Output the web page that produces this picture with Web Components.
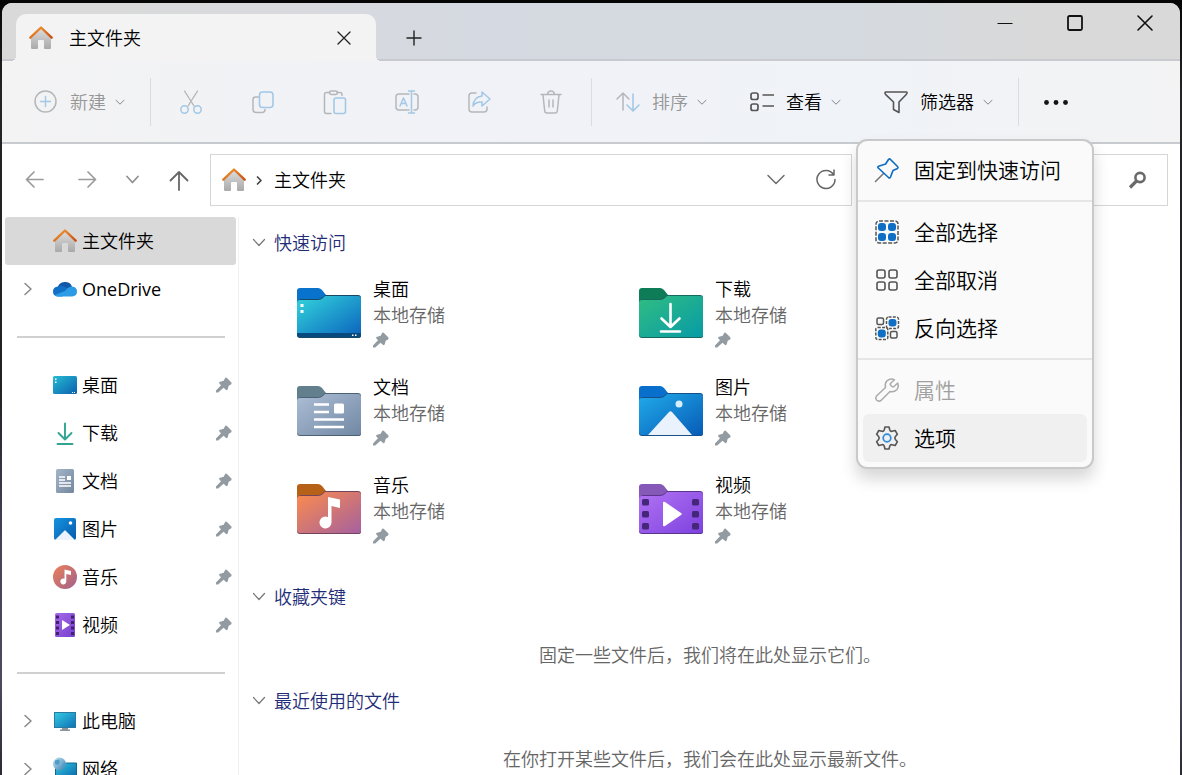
<!DOCTYPE html>
<html lang="zh-CN">
<head>
<meta charset="utf-8">
<meta name="viewport" content="width=device-width, initial-scale=1">
<title>主文件夹</title>
<style>
    :root {
        --textColor: #000;
        --mutedColor: #666;
        --disabledColor: #969696;
        --headingColor: #1f2d78;
        --lineColor: #d0d0d0;
        --surface: #fff;
        --textSize: 18px;
        --menuTextSize: 21px;
    }
    body {
        margin: 0;
        height: 100vh;
        overflow: hidden;
        color: var(--textColor);
        background: linear-gradient(#050505, #242426 12%, #222224 50%, #45435a 70%, #4c4a60 88%, #2b2b31);
        font: 350 var(--textSize)/26px "Open Sans", "Noto Sans CJK SC", sans-serif;
    }
</style>
</head>
<body>
<explorer-window></explorer-window>

<script>
const line = 'fill="none" stroke-linecap="round" stroke-linejoin="round"'
const grey = '#b4b7ba'
const paleBlue = '#a3c8e6'
const dark = '#555'
const blue = '#0f6fc5'

const gradient = (id, from, to, extra = 'x2="1" y2="1"') => `
    <linearGradient id="${id}" x1="0" y1="0" ${extra}>
        <stop offset="0" stop-color="${from}"/>
        <stop offset="1" stop-color="${to}"/>
    </linearGradient>`

// shared folder shape, the caller adds the emblem on its front
const folder = (tab, from, to, edge, emblem) => `
    <defs>${gradient('front', from, to)}</defs>
    <path fill="${tab}" d="M0 22V7q0-3 3-3h18q2 0 4 2l4 5-7 11z"/>
    <path fill="${edge}" d="M0 20q0-4 4-5h17q3 0 5-2l2-2h33q3 0 3 3v38q0 2-3 2H3q-3 0-3-3z"/>
    <path fill="url(#front)" d="M0 19q0-3 3-3h18q3 0 5-2l2-2h33q3 0 3 3v36q0 2-3 2H3q-3 0-3-3z"/>
    ${emblem}`

const icons = {
    home: ['0 0 24 24', `
        <defs>${gradient('wall', '#dedede', '#a9a9a9', 'x2="0" y2="1"')}${gradient('roof', '#f49b32', '#c94f14')}</defs>
        <path fill="url(#wall)" d="M2 11 12 2l10 9v11q0 1-1 1h-5q-1 0-1-1v-7q0-1-1-1h-4q-1 0-1 1v7q0 1-1 1H3q-1 0-1-1z"/>
        <path ${line} stroke="url(#roof)" stroke-width="2.4" d="M1.3 11.700 12 1.500l10.7 10.200"/>`],
    close: ['0 0 24 24', `<path ${line} stroke="#222" stroke-width="1.3" d="m6 6 12 12M18 6 6 18"/>`],
    winClose: ['0 0 24 24', `<path ${line} stroke="#111" stroke-width="1.6" d="m5 5 14 14M19 5 5 19"/>`],
    winMax: ['0 0 24 24', `<rect x="5" y="5" width="14" height="14" rx="1.5" fill="none" stroke="#111" stroke-width="1.8"/>`],
    winMin: ['0 0 24 24', `<path stroke="#111" stroke-width="1.2" d="M4.5 12.5h15"/>`],
    plus: ['0 0 24 24', `<path ${line} stroke="#222" stroke-width="1.4" d="M12 5v14M5 12h14"/>`],
    down: ['0 0 12 12', `<path ${line} stroke="currentColor" d="m2 4.3 4 3.9 4-3.9"/>`],
    create: ['0 0 24 24', `
        <circle cx="11.5" cy="11.5" r="10.5" fill="none" stroke="${grey}" stroke-width="1.5"/>
        <path ${line} stroke="${paleBlue}" stroke-width="1.5" d="M11.5 6.500v10M6.500 11.5h10"/>`],
    cut: ['0 0 24 24', `
        <path ${line} stroke="${grey}" stroke-width="1.4" d="M5.5 1 15 16M18.5 1 9 16"/>
        <g fill="none" stroke="${paleBlue}" stroke-width="1.5"><circle cx="5.5" cy="19.5" r="3.7"/><circle cx="18.5" cy="19.5" r="3.7"/></g>`],
    copy: ['0 0 24 24', `
        <path ${line} stroke="${grey}" stroke-width="1.5" d="M8 7H4.500Q2 7 2 9.500v10Q2 22.500 5.500 22.500H11q3 0 3-3"/>
        <rect x="8.500" y="2" width="13.500" height="15.500" rx="3" fill="none" stroke="${paleBlue}" stroke-width="1.6"/>`],
    paste: ['0 0 24 24', `
        <path ${line} stroke="${grey}" stroke-width="1.5" d="M8 23.500H3.500q-2 0-2-2V4.500q0-2 2-2h3M14 2.500h3q2 0 2 2v1"/>
        <rect x="6.500" y="1" width="8" height="3.500" rx="1.700" fill="none" stroke="${grey}" stroke-width="1.5"/>
        <rect x="11" y="8" width="11.500" height="15.500" rx="2" fill="none" stroke="${paleBlue}" stroke-width="1.6"/>`],
    rename: ['0 0 24 24', `
        <path ${line} stroke="${grey}" stroke-width="1.5" d="M14 4H4Q1 4 1 7v10q0 3 3 3h10M19 4h1q3 0 3 3v10q0 3-3 3h-1"/>
        <path ${line} stroke="${paleBlue}" stroke-width="1.5" d="M5 16 8.500 8l3.500 8M6.300 13.500h4.400M16.500 1v22M13.500 1h6M13.500 23h6"/>`],
    share: ['0 0 24 24', `
        <path ${line} stroke="${grey}" stroke-width="1.5" d="M9 3H5Q2 3 2 6v13q0 3 3 3h12q3 0 3-3v-2"/>
        <path ${line} stroke="${paleBlue}" stroke-width="1.6" d="m15 2 8 7-8 7v-4q-6-.5-9 4 .5-9 9-10z"/>`],
    trash: ['0 0 24 24', `
        <path ${line} stroke="${grey}" stroke-width="1.5" d="M2 4.500h20M8.500 4q.5-3 3.500-3t3.500 3M4 5l1.700 16q.2 2 2.300 2h8q2 0 2.300-2L20 5M10 10v7M14 10v7"/>`],
    sort: ['0 0 24 24', `
        <path ${line} stroke="${grey}" stroke-width="1.5" d="M7 20V3M1 9l6-6 6 6"/>
        <path ${line} stroke="${paleBlue}" stroke-width="1.6" d="M17 4v17M11 15l6 6 6-6"/>`],
    view: ['0 0 24 24', `
        <g fill="none" stroke="${dark}" stroke-width="1.7"><rect x="1" y="3" width="7" height="6.500" rx="2"/><rect x="1" y="14" width="7" height="6.500" rx="2"/>
        <path d="M12.500 5H24M12.500 16H24"/></g>`],
    filter: ['0 0 24 24', `
        <path ${line} stroke="${dark}" stroke-width="1.6" d="M1.500 2h21q.7 0 .5 1-.3 1-1 1.800L15 12v10.500l-5.500-3V12L2 4.800Q1 4 1 3q0-1 .5-1z"/>`],
    more: ['0 0 24 24', `<g fill="#151515"><circle cx="3.500" cy="12.500" r="2.400"/><circle cx="13" cy="12.500" r="2.400"/><circle cx="22.500" cy="12.500" r="2.400"/></g>`],
    back: ['0 0 24 24', `<path ${line} stroke="#9b9b9b" stroke-width="1.7" d="M20 11.500H3.500M11 4 3.500 11.500 11 19"/>`],
    forward: ['0 0 24 24', `<path ${line} stroke="#9b9b9b" stroke-width="1.7" d="M4 11.500h16.500M13 4l7.500 7.500L13 19"/>`],
    recent: ['0 0 24 24', `<path ${line} stroke="#8f8f8f" stroke-width="1.7" d="m6 8.500 5.500 6 5.500-6"/>`],
    up: ['0 0 24 24', `<path ${line} stroke="#666" stroke-width="1.8" d="M12 22V4M3.500 12.500 12 4l8.500 8.500"/>`],
    crumb: ['0 0 12 12', `<path ${line} stroke="#444" stroke-width="1.7" d="m3.500 3 3.500 3.500-3.500 3.500"/>`],
    wideDown: ['0 0 24 24', `<path ${line} stroke="#666" stroke-width="1.4" d="m4 7.500 8 8 8-8"/>`],
    refresh: ['0 0 24 24', `<path ${line} stroke="#666" stroke-width="1.5" d="M19.500 6.500A9 9 0 1 0 21 11.500M20 2v5h-5"/>`],
    search: ['0 0 24 24', `
        <g fill="none" stroke="#6a6a6a"><circle cx="15" cy="9.500" r="4.600" stroke-width="2.600"/><path stroke-width="3.200" d="m11.500 13-6.500 6.500"/></g>`],
    expand: ['0 0 12 16', `<path ${line} stroke="#888" stroke-width="1.5" d="m4 2.500 6 5.500-6 5.500"/>`],
    collapse: ['0 0 14 14', `<path ${line} stroke="#777" stroke-width="1.2" d="m1.500 3.500 5.500 6 5.500-6"/>`],
    pin: ['0 0 16 16', `
        <path fill="#929ba1" d="M9 1.200q1-1.200 2.200 0l4 4q1 1.200-.2 2.200l-2.300 1.300-.9 3.300q-.7 2-2.200.6L7.500 10.700 2.200 15.500H0v-2L5 8.200 3.600 6.800Q2.300 5.200 4.200 4.700l3.500-1z"/>`],
    oneDrive: ['0 0 24 24', `
        <path fill="#1257a8" d="M4 12q2-8 9-7 5 .5 6 5l-8 5z"/>
        <path fill="#1170c6" d="M5 9.500q4-2 8 1l6 4-10 5H5q-5-.5-5-5t5-5z"/>
        <path fill="#2b9be6" d="M12 14q3-4.500 7-4.500 5 .5 5 5t-5 5H5q-2 0-3.500-1.500z"/>`],
    desktop: ['0 0 24 24', `
        <defs>${gradient('screen', '#26bcd4', '#0b60ad')}</defs>
        <rect y="3" width="24" height="18" rx="1.5" fill="url(#screen)"/>
        <path fill="#fff" d="M2 5.500h1.500V7H2zM2 8.500h1.500V10H2zM19 19h1v1h-1zM21 19h1v1h-1z"/>`],
    download: ['0 0 24 24', `<path ${line} stroke="#31a493" stroke-width="1.9" d="M12 2.500v15M5.500 12l6.500 6.500 6.500-6.500M4.500 23h15"/>`],
    document: ['0 0 24 24', `
        <defs>${gradient('page', '#a4b5c9', '#73879d')}</defs>
        <rect x="3" width="18" height="24" rx="1.5" fill="url(#page)"/>
        <path stroke="#fff" stroke-width="1.3" d="M6 8h6M6 11h6M6 14h12M6 17h12"/>
        <path fill="#fff" d="M14 7h4v4h-4z"/>`],
    picture: ['0 0 24 24', `
        <defs>${gradient('sky', '#1594df', '#075aac')}</defs>
        <rect x="1" y="1" width="22" height="22" rx="2" fill="url(#sky)"/>
        <path fill="#edf3fc" d="m2 23 9.300-9.300q.7-.7 1.400 0L22 23z"/><circle cx="17.500" cy="6" r="1.800" fill="#fff"/>`],
    music: ['0 0 24 24', `
        <defs>${gradient('disc', '#ec8058', '#a0618e')}</defs>
        <circle cx="12" cy="12" r="12" fill="url(#disc)"/>
        <path fill="#fff" d="M11.500 4.500 18 6v4l-4.700-1v7.500a3 3 0 1 1-1.800-2.800z"/>`],
    video: ['0 0 24 24', `
        <defs>${gradient('film', '#a768e8', '#7540ce')}</defs>
        <rect x="2" width="20" height="24" rx="1.5" fill="url(#film)"/>
        <path fill="#402071" d="M3 2.500h3v3H3zM3 8h3v3H3zM3 13.500h3v3H3zM3 19h3v3H3zM18 2.500h3v3h-3zM18 8h3v3h-3zM18 13.500h3v3h-3zM18 19h3v3h-3z"/>
        <path fill="#fff" d="m9 7 8 5-8 5z"/>`],
    computer: ['0 0 24 24', `
        <defs>${gradient('monitor', '#34cbe3', '#0e70b5')}</defs>
        <rect x="1.500" y="3.500" width="21" height="15" fill="url(#monitor)" stroke="#287b9e"/>
        <path fill="#8b949b" d="M9 19h6v1.500h2V22H7v-1.500h2z"/>`],
    network: ['0 0 24 24', `
        <defs>${gradient('lan', '#32c8e3', '#0865aa')}${gradient('globe', '#c5e7f5', '#327fae')}</defs>
        <path fill="url(#lan)" stroke="#17658a" d="M2.500 21.500V7.500h8l3-1.500h10v15.500z"/>
        <circle cx="6.500" cy="7" r="6.500" fill="url(#globe)"/>
        <path fill="#4f9cc7" d="m2 3.500 4-1 1 2.500-2 3-3-1zm8 3 2-1v4l-3 2z"/>`],
    pinOutline: ['0 0 24 24', `
        <path ${line} stroke="#777" stroke-width="1.6" d="m8.500 15.500-8 8"/>
        <path ${line} stroke="${blue}" stroke-width="1.7" d="M13.500 1.500q1-1 2 0L22.500 8.500q1 1 0 2l-4.500 2-2.500 6.500q-.7 1.500-2 .5L3.300 10q-1-1 .3-1.800l7-2.200z"/>`],
    selectAll: ['0 0 24 24', `
        <rect x="1" y="1" width="22" height="22" rx="3" fill="none" stroke="${dark}" stroke-width="1.5" stroke-dasharray="4 1.5"/>
        <g fill="${blue}"><rect x="3" y="3" width="8" height="8" rx="3"/><rect x="13" y="3" width="8" height="8" rx="3"/><rect x="3" y="13" width="8" height="8" rx="3"/><rect x="13" y="13" width="8" height="8" rx="3"/></g>`],
    selectNone: ['0 0 24 24', `
        <g fill="none" stroke="${dark}" stroke-width="1.6"><rect x="2" y="2" width="8" height="8" rx="2"/><rect x="14" y="2" width="8" height="8" rx="2"/><rect x="2" y="14" width="8" height="8" rx="2"/><rect x="14" y="14" width="8" height="8" rx="2"/></g>`],
    invert: ['0 0 24 24', `
        <g fill="none" stroke="${dark}" stroke-width="1.5"><rect x="2" y="2" width="6.500" height="6.500" rx="1.5"/><rect x="15.500" y="15.500" width="6.500" height="6.500" rx="1.5"/>
        <rect x="11.500" y="1" width="12" height="11.500" rx="2" stroke-dasharray="3 1.3"/><rect x=".8" y="11.500" width="12" height="12" rx="2" stroke-dasharray="3 1.3"/></g>
        <g fill="${blue}"><rect x="13.500" y="3" width="8" height="7.500" rx="3"/><rect x="2.800" y="13.500" width="8" height="8" rx="3"/></g>`],
    wrench: ['0 0 24 24', `
        <path ${line} stroke="#aaa" stroke-width="1.5" d="M19.500 1.800q-4-2-7.500 1-2.500 2.800-1.500 6.700L1.500 18q-1.500 2 0 4 2 2 4.500.5l9-9q4 1 6.700-1.700 2.500-3 1-6.800L19 8.500q-1 1-2 0l-1.300-1.300q-1-1 0-2z"/>`],
    gear: ['0 0 24 24', `
        <path ${line} stroke="${dark}" stroke-width="1.6" d="M10 1h4l.8 3q.6 1.600 2.200 1.300l3.200-.8 2.200 3.800-2 2.200q-1.200 1.500 0 3l2 2.200-2.200 3.800-3.200-.8q-1.600-.3-2.200 1.300l-.8 3h-4l-.8-3q-.6-1.600-2.200-1.300l-3.200.8-2.200-3.800 2-2.200q1.200-1.500 0-3l-2-2.200 2.200-3.800 3.200.8q1.600.3 2.200-1.300z"/>
        <circle cx="12" cy="12" r="3.800" fill="none" stroke="#2b8bdc" stroke-width="1.7"/>`],
    desktopFolder: ['0 -2 64 64', folder('#0872cd', '#32d5dc', '#0b62bd', '#174866', `
        <path fill="#094a7e" d="M0 49h64v2q0 2-3 2H3q-3 0-3-2z"/>
        <path fill="#fff" d="M3.500 20h3v3h-3zM3.500 26h3v3h-3zM55 50.500h1.500V52H55zM58 50.500h1.500V52H58z"/>`)],
    downloadFolder: ['0 -2 64 64', folder('#0f7c58', '#31bd82', '#079ba6', '#15695f', `
        <path ${line} stroke="#fff" stroke-width="2.6" d="M31.500 20v22M22.500 34.500l9 8.500 9-8.500M22 47.500h19"/>`)],
    documentFolder: ['0 -2 64 64', folder('#617f8c', '#adbed5', '#7188a4', '#4c6175', `
        <path stroke="#fff" stroke-width="2.6" d="M17 22.500h15M17 30h15M17 37.500h30M17 45h30"/>
        <rect x="37" y="21.500" width="10" height="10" rx="1.5" fill="#fff"/>`)],
    pictureFolder: ['0 -2 64 64', folder('#0870cc', '#21abe9', '#075bb7', '#164f89', `
        <path fill="#e9f2fd" d="m9 53 21-23q1.500-1.500 3 0l20 23z"/><circle cx="40" cy="22" r="3.500" fill="#d8eefa"/>`)],
    musicFolder: ['0 -2 64 64', folder('#b76018', '#fc8c4c', '#a5609f', '#73445b', `
        <path fill="#fff" d="m31 17 12 2.500V28l-8.500-2v16.500a6 6 0 1 1-3.500-5.500z"/>`)],
    videoFolder: ['0 -2 64 64', folder('#8659b8', '#b273f3', '#7d42df', '#5b348c', `
        <g fill="#45277a"><rect x="3" y="19" width="7" height="6.500" rx="1.5"/><rect x="3" y="31" width="7" height="6.500" rx="1.5"/><rect x="3" y="43" width="7" height="6.500" rx="1.5"/><rect x="53" y="19" width="7" height="6.500" rx="1.5"/><rect x="53" y="31" width="7" height="6.500" rx="1.5"/><rect x="53" y="43" width="7" height="6.500" rx="1.5"/></g>
        <path fill="#fff" d="M24 23q0-2 2-1l16 11q1.500 1 0 2L26 46q-2 1-2-1z"/>`)]
}

class ShadowElement extends HTMLElement {
    constructor() {
        super()
        this.attachShadow({mode: 'open'})
    }
    connectedCallback() {
        const template = document.createElement('template')
        template.innerHTML = `
            <style>
                * { box-sizing: border-box; }
                button {
                    margin: 0;
                    padding: 0;
                    border: 0;
                    background: none;
                    font: inherit;
                    color: inherit;
                    display: flex;
                    align-items: center;
                    justify-content: center;
                }
            </style>
            ${this.render()}
        `
        this.shadowRoot.replaceChildren(template.content.cloneNode(true))
    }
}

class UiIcon extends ShadowElement {
    render() {
        const [viewBox, shapes] = icons[this.getAttribute('name')]
        return `
            <style>
                :host {
                    display: block;
                    flex: none;
                    width: var(--iconWidth, 24px);
                    height: var(--iconHeight, var(--iconWidth, 24px));
                }
                svg { display: block; width: 100%; height: 100%; overflow: visible; }
            </style>
            <svg viewBox="${viewBox}" aria-hidden="true">${shapes}</svg>
        `
    }
}

class TitleBar extends ShadowElement {
    render() {
        return `
            <style>
                :host {
                    display: flex;
                    height: 58px;
                    padding: 11px 0 0 14px;
                    background: linear-gradient(90deg, #d9d9d9 8%, #d5d9e1 40%, #d5dae0 72%, #d9d9d9 88%);
                    box-shadow: inset 0 -2px #c8cad0;
                }
                .tab {
                    position: relative;
                    display: flex;
                    align-items: center;
                    gap: 16px;
                    width: 360px;
                    padding: 0 16px 0 13px;
                    background: #f3f3f4;
                    border-radius: 10px 10px 0 0;
                }
                /* flared feet of the active tab */
                .tab::before,
                .tab::after {
                    content: '';
                    position: absolute;
                    bottom: 0;
                    width: 5px;
                    height: 5px;
                }
                .tab::before { right: 100%; background: radial-gradient(circle at 0 0, transparent 5px, #f3f3f4 5px); }
                .tab::after { left: 100%; background: radial-gradient(circle at 100% 0, transparent 5px, #f3f3f4 5px); }
                .name { flex: 1; }
                .tab button { width: 32px; height: 32px; }
                .add { width: 48px; margin-left: 14px; }
                .controls { display: flex; margin: -11px 0 0 auto; height: 40px; }
                .controls button { width: 70px; }
            </style>
            <div class="tab">
                <ui-icon name="home"></ui-icon>
                <span class="name">主文件夹</span>
                <button aria-label="关闭标签页"><ui-icon name="close"></ui-icon></button>
            </div>
            <button class="add" aria-label="新标签页"><ui-icon name="plus"></ui-icon></button>
            <div class="controls">
                <button aria-label="最小化"><ui-icon name="winMin"></ui-icon></button>
                <button aria-label="最大化"><ui-icon name="winMax"></ui-icon></button>
                <button aria-label="关闭"><ui-icon name="winClose"></ui-icon></button>
            </div>
        `
    }
}

class CommandButton extends ShadowElement {
    render() {
        const disabled = this.hasAttribute('disabled') ? 'disabled' : ''
        return `
            <style>
                :host { display: block; }
                button { height: 48px; gap: 12px; padding: 0 12px; }
                button:disabled { color: var(--disabledColor); }
                .label { display: flex; align-items: center; gap: 8px; white-space: nowrap; }
                .down { --iconWidth: 12px; color: #888; }
            </style>
            <button ${disabled}>
                <ui-icon name="${this.getAttribute('icon')}"></ui-icon>
                <span class="label"><slot></slot><ui-icon class="down" name="down"></ui-icon></span>
            </button>
        `
    }
}

class ToolButton extends ShadowElement {
    render() {
        const disabled = this.hasAttribute('disabled') ? 'disabled' : ''
        return `
            <style>
                :host { display: block; width: 72px; }
                button { width: 100%; height: 48px; }
            </style>
            <button ${disabled} aria-label="${this.getAttribute('label')}">
                <ui-icon name="${this.getAttribute('icon')}"></ui-icon>
            </button>
        `
    }
}

class MenuEntry extends ShadowElement {
    render() {
        const disabled = this.hasAttribute('disabled') ? 'disabled' : ''
        return `
            <style>
                :host { display: block; }
                button {
                    width: 100%;
                    height: 48px;
                    gap: 15px;
                    padding: 0 26px 0 12px;
                    justify-content: flex-start;
                    border-radius: 6px;
                    white-space: nowrap;
                }
                button:disabled { color: #a0a0a0; }
                :host([active]) button { background: #f0f0f0; }
            </style>
            <button role="menuitem" ${disabled}>
                <ui-icon name="${this.getAttribute('icon')}"></ui-icon>
                <span><slot></slot></span>
            </button>
        `
    }
}

class MoreMenu extends ShadowElement {
    render() {
        return `
            <style>
                :host { display: block; position: relative; width: 64px; }
                .trigger { width: 100%; height: 48px; }
                .menu {
                    position: absolute;
                    z-index: 2;
                    top: calc(100% + 13px);
                    right: -7px;
                    padding: 5px;
                    border: 2px solid #c9c9cb;
                    border-radius: 11px;
                    background: #fafafa;
                    background-clip: padding-box;
                    box-shadow: 0 10px 16px rgba(0, 0, 0, .16);
                    font-size: var(--menuTextSize);
                    line-height: 28px;
                }
                hr { height: 2px; margin: 6px -5px; border: 0; background: #e6e6e6; }
            </style>
            <button class="trigger" aria-label="查看更多" aria-expanded="true"><ui-icon name="more"></ui-icon></button>
            <div class="menu" role="menu">
                <menu-entry icon="pinOutline">固定到快速访问</menu-entry>
                <hr>
                <menu-entry icon="selectAll">全部选择</menu-entry>
                <menu-entry icon="selectNone">全部取消</menu-entry>
                <menu-entry icon="invert">反向选择</menu-entry>
                <hr>
                <menu-entry icon="wrench" disabled>属性</menu-entry>
                <menu-entry icon="gear" active>选项</menu-entry>
            </div>
        `
    }
}

class CommandBar extends ShadowElement {
    render() {
        return `
            <style>
                :host {
                    display: flex;
                    align-items: center;
                    height: 83px;
                    padding-left: 20px;
                    background: linear-gradient(90deg, #f3f3f4, #f0f2f7 45%, #f0f3f7 75%, #f3f3f4);
                    border-bottom: 2px solid #c7cacf;
                }
                .group { display: flex; }
                .text { gap: 18px; }
                i { width: 1px; height: 48px; background: #dadcdf; }
                .after { margin: 0 4px 0 12px; }
                .before { margin: 0 12px 0 4px; }
            </style>
            <command-button icon="create" disabled>新建</command-button>
            <i class="after"></i>
            <div class="group">
                <tool-button icon="cut" label="剪切" disabled></tool-button>
                <tool-button icon="copy" label="复制" disabled></tool-button>
                <tool-button icon="paste" label="粘贴" disabled></tool-button>
                <tool-button icon="rename" label="重命名" disabled></tool-button>
                <tool-button icon="share" label="共享" disabled></tool-button>
                <tool-button icon="trash" label="删除" disabled></tool-button>
            </div>
            <i class="before"></i>
            <div class="group text">
                <command-button icon="sort" disabled>排序</command-button>
                <command-button icon="view">查看</command-button>
                <command-button icon="filter">筛选器</command-button>
            </div>
            <i class="after"></i>
            <more-menu></more-menu>
        `
    }
}

class AddressBar extends ShadowElement {
    render() {
        return `
            <style>
                :host { display: flex; padding: 10px 12px 11px 7px; }
                .nav { width: 52px; height: 52px; }
                .recent { width: 40px; }
                .address,
                .search {
                    display: flex;
                    align-items: center;
                    height: 52px;
                    border: 1px solid #d6d6d6;
                }
                .address { flex: 1; margin: 0 12px 0 5px; padding-left: 11px; gap: 8px; }
                .address a { flex: 1; color: inherit; text-decoration: none; }
                .address button { width: 50px; height: 50px; }
                .tools { display: flex; }
                .crumb { --iconWidth: 12px; }
                .search { width: 304px; }
                input {
                    flex: 1;
                    min-width: 0;
                    height: 100%;
                    padding: 0 12px;
                    border: 0;
                    font: inherit;
                }
                .search button { width: 60px; height: 50px; }
            </style>
            <button class="nav" aria-label="后退"><ui-icon name="back"></ui-icon></button>
            <button class="nav" aria-label="前进"><ui-icon name="forward"></ui-icon></button>
            <button class="nav recent" aria-label="最近浏览的位置"><ui-icon name="recent"></ui-icon></button>
            <button class="nav" aria-label="向上"><ui-icon name="up"></ui-icon></button>
            <div class="address">
                <ui-icon name="home"></ui-icon>
                <ui-icon class="crumb" name="crumb"></ui-icon>
                <a href="#home">主文件夹</a>
                <div class="tools">
                    <button aria-label="以前的位置"><ui-icon name="wideDown"></ui-icon></button>
                    <button aria-label="刷新"><ui-icon name="refresh"></ui-icon></button>
                </div>
            </div>
            <div class="search">
                <input type="text" aria-label="搜索">
                <button aria-label="开始搜索"><ui-icon name="search"></ui-icon></button>
            </div>
        `
    }
}

class SideItem extends ShadowElement {
    render() {
        const expand = this.hasAttribute('expandable') ? '<ui-icon name="expand"></ui-icon>' : ''
        const pin = this.hasAttribute('pinned') ? '<ui-icon class="pin" name="pin"></ui-icon>' : ''
        return `
            <style>
                :host { display: block; }
                a {
                    display: flex;
                    align-items: center;
                    gap: 5px;
                    height: 48px;
                    padding: 0 4px 0 16px;
                    border-radius: 3px;
                    color: inherit;
                    text-decoration: none;
                }
                :host([active]) a { background: #d9d9d9; }
                .expand { width: 27px; --iconWidth: 12px; --iconHeight: 16px; }
                .name { flex: 1; }
                .pin { --iconWidth: 16px; }
            </style>
            <a href="#${this.getAttribute('icon')}">
                <span class="expand">${expand}</span>
                <ui-icon name="${this.getAttribute('icon')}"></ui-icon>
                <span class="name"><slot></slot></span>
                ${pin}
            </a>
        `
    }
}

class SideNav extends ShadowElement {
    render() {
        return `
            <style>
                :host {
                    display: block;
                    width: 237px;
                    flex: none;
                    padding: 0 2px 0 3px;
                    border-right: 1px solid #f0f0f0;
                    overflow: hidden;
                }
                hr { height: 2px; margin: 23px 11px 23px 12px; border: 0; background: var(--lineColor); }
                /* the only Latin name, regular weight keeps it level with the rest */
                .latin { font-weight: 400; }
            </style>
            <nav>
                <side-item icon="home" active>主文件夹</side-item>
                <side-item class="latin" icon="oneDrive" expandable>OneDrive</side-item>
                <hr>
                <side-item icon="desktop" pinned>桌面</side-item>
                <side-item icon="download" pinned>下载</side-item>
                <side-item icon="document" pinned>文档</side-item>
                <side-item icon="picture" pinned>图片</side-item>
                <side-item icon="music" pinned>音乐</side-item>
                <side-item icon="video" pinned>视频</side-item>
                <hr>
                <side-item icon="computer" expandable>此电脑</side-item>
                <side-item icon="network" expandable>网络</side-item>
            </nav>
        `
    }
}

class FolderCard extends ShadowElement {
    render() {
        return `
            <style>
                :host {
                    display: flex;
                    align-items: center;
                    gap: 12px;
                    padding: 7px 0 15px;
                    --iconWidth: 64px;
                }
                .place { color: var(--mutedColor); }
                .pin {
                    display: flex;
                    align-items: center;
                    height: 24px;
                    --iconWidth: 16px;
                }
            </style>
            <ui-icon name="${this.getAttribute('icon')}"></ui-icon>
            <div>
                <div><slot></slot></div>
                <div class="place">本地存储</div>
                <div class="pin"><ui-icon name="pin"></ui-icon></div>
            </div>
        `
    }
}

class FileSection extends ShadowElement {
    render() {
        return `
            <style>
                :host { display: block; }
                h2 { margin: 0; font: inherit; }
                button { height: 52px; gap: 8px; color: var(--headingColor); }
                button ui-icon { --iconWidth: 14px; }
            </style>
            <h2><button aria-expanded="true"><ui-icon name="collapse"></ui-icon><span>${this.getAttribute('heading')}</span></button></h2>
            <slot></slot>
        `
    }
}

class FileList extends ShadowElement {
    render() {
        return `
            <style>
                :host { display: block; flex: 1; min-width: 0; padding: 0 12px 0 13px; overflow: hidden; }
                .cards {
                    display: grid;
                    grid-template-columns: repeat(auto-fill, 342px);
                    padding-left: 45px;
                    margin-bottom: 8px;
                }
                p {
                    margin: 12px 0 0;
                    line-height: 40px;
                    text-align: center;
                    color: var(--mutedColor);
                }
            </style>
            <file-section heading="快速访问">
                <div class="cards">
                    <folder-card icon="desktopFolder">桌面</folder-card>
                    <folder-card icon="downloadFolder">下载</folder-card>
                    <folder-card icon="documentFolder">文档</folder-card>
                    <folder-card icon="pictureFolder">图片</folder-card>
                    <folder-card icon="musicFolder">音乐</folder-card>
                    <folder-card icon="videoFolder">视频</folder-card>
                </div>
            </file-section>
            <file-section heading="收藏夹键">
                <p>固定一些文件后，我们将在此处显示它们。</p>
            </file-section>
            <file-section heading="最近使用的文件">
                <p>在你打开某些文件后，我们会在此处显示最新文件。</p>
            </file-section>
        `
    }
}

class ExplorerWindow extends ShadowElement {
    render() {
        return `
            <style>
                :host {
                    display: flex;
                    flex-direction: column;
                    height: calc(100vh - 3px);
                    margin: 3px 2px 0;
                    border-radius: 10px 10px 0 0;
                    background: var(--surface);
                    overflow: hidden;
                }
                title-bar, command-bar, address-bar { flex: none; }
                .content { display: flex; flex: 1; min-height: 0; }
            </style>
            <title-bar></title-bar>
            <command-bar></command-bar>
            <address-bar></address-bar>
            <div class="content">
                <side-nav></side-nav>
                <file-list></file-list>
            </div>
        `
    }
}

customElements.define('ui-icon', UiIcon)
customElements.define('title-bar', TitleBar)
customElements.define('command-button', CommandButton)
customElements.define('tool-button', ToolButton)
customElements.define('menu-entry', MenuEntry)
customElements.define('more-menu', MoreMenu)
customElements.define('command-bar', CommandBar)
customElements.define('address-bar', AddressBar)
customElements.define('side-item', SideItem)
customElements.define('side-nav', SideNav)
customElements.define('folder-card', FolderCard)
customElements.define('file-section', FileSection)
customElements.define('file-list', FileList)
customElements.define('explorer-window', ExplorerWindow)
</script>
</body>
</html>
